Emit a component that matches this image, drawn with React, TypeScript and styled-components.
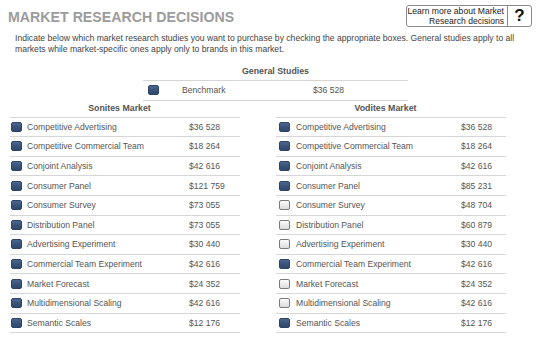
import React from 'react';
import styled, { createGlobalStyle } from 'styled-components';

const GlobalStyle = createGlobalStyle`
  body {
    margin: 0;
    background: #ffffff;
    font-family: "Liberation Sans", Arial, sans-serif;
  }
`;

const Page = styled.div`
  width: 536px;
  height: 341px;
  overflow: hidden;
  color: #555555;
`;

const Header = styled.div`
  display: flex;
  justify-content: space-between;
  align-items: flex-start;
  padding: 5px 4px 0 8px;
`;

const Title = styled.h1`
  margin: 4px 0 0;
  font-size: 14.2px;
  line-height: 16px;
  font-weight: 700;
  color: #9c9c9c;
`;

const HelpButton = styled.button`
  display: flex;
  align-items: stretch;
  width: 126px;
  height: 22px;
  padding: 0;
  border: 1px solid #8a8a8a;
  border-radius: 3px;
  background: #ffffff;
  font-family: inherit;
  cursor: pointer;
`;

const HelpText = styled.span`
  flex: 1;
  padding: 1px 3px 0 0;
  text-align: right;
  font-size: 8.6px;
  line-height: 9.6px;
  color: #222222;
`;

const HelpMark = styled.span`
  display: flex;
  align-items: center;
  justify-content: center;
  width: 23px;
  border-left: 1px solid #8a8a8a;
  font-size: 17px;
  font-weight: 700;
  color: #111111;
`;

const Intro = styled.p`
  width: 510px;
  margin: 5.5px 0 0 15px;
  font-size: 8.6px;
  line-height: 11px;
  color: #444444;
`;

const GeneralSection = styled.section`
  width: 265px;
  margin: 10.5px 0 0 143px;
`;

const SectionTitle = styled.h2<{ $shift?: number }>`
  margin: 0;
  padding: 0 ${(p) => p.$shift ?? 0}px 3px 0;
  font-size: 8.8px;
  line-height: 12px;
  font-weight: 700;
  text-align: center;
  color: #555555;
`;

const Table = styled.div`
  border-top: 1px solid #d6d6d6;
`;

const Row = styled.div<{ $indent: number; $gap: number; $label: number }>`
  display: grid;
  grid-template-columns: 11px ${(p) => p.$label}px auto;
  column-gap: ${(p) => p.$gap}px;
  align-items: center;
  height: 18.6px;
  padding-left: ${(p) => p.$indent}px;
  border-bottom: 1px solid #d6d6d6;
  font-size: 8.6px;
  color: #555555;
`;

const Label = styled.span`
  white-space: nowrap;
`;

const Price = styled.span`
  white-space: nowrap;
`;

const Box = styled.span<{ $checked: boolean }>`
  box-sizing: border-box;
  width: 11px;
  height: 10px;
  border-radius: 2px;
  border: 1px solid ${(p) => (p.$checked ? '#2d4466' : '#7a7a7a')};
  background: ${(p) =>
    p.$checked
      ? 'linear-gradient(#4b6790, #3a5479 50%, #2f486c)'
      : 'linear-gradient(#fbfbfb, #dcdcdc)'};
`;

const Markets = styled.div`
  display: flex;
  gap: 36px;
  padding-left: 10px;
  margin-top: 1px;
`;

const Market = styled.section`
  width: 230px;
`;

type Study = { name: string; price: string; checked: boolean };

const sonites: Study[] = [
  { name: 'Competitive Advertising', price: '$36 528', checked: true },
  { name: 'Competitive Commercial Team', price: '$18 264', checked: true },
  { name: 'Conjoint Analysis', price: '$42 616', checked: true },
  { name: 'Consumer Panel', price: '$121 759', checked: true },
  { name: 'Consumer Survey', price: '$73 055', checked: true },
  { name: 'Distribution Panel', price: '$73 055', checked: true },
  { name: 'Advertising Experiment', price: '$30 440', checked: true },
  { name: 'Commercial Team Experiment', price: '$42 616', checked: true },
  { name: 'Market Forecast', price: '$24 352', checked: true },
  { name: 'Multidimensional Scaling', price: '$42 616', checked: true },
  { name: 'Semantic Scales', price: '$12 176', checked: true },
];

const vodites: Study[] = [
  { name: 'Competitive Advertising', price: '$36 528', checked: true },
  { name: 'Competitive Commercial Team', price: '$18 264', checked: true },
  { name: 'Conjoint Analysis', price: '$42 616', checked: true },
  { name: 'Consumer Panel', price: '$85 231', checked: true },
  { name: 'Consumer Survey', price: '$48 704', checked: false },
  { name: 'Distribution Panel', price: '$60 879', checked: false },
  { name: 'Advertising Experiment', price: '$30 440', checked: false },
  { name: 'Commercial Team Experiment', price: '$42 616', checked: true },
  { name: 'Market Forecast', price: '$24 352', checked: false },
  { name: 'Multidimensional Scaling', price: '$42 616', checked: false },
  { name: 'Semantic Scales', price: '$12 176', checked: true },
];

function MarketTable({
  title,
  studies,
  indent,
  gap,
  label,
}: {
  title: string;
  studies: Study[];
  indent: number;
  gap: number;
  label: number;
}) {
  return (
    <Market>
      <SectionTitle $shift={11}>{title}</SectionTitle>
      <Table>
        {studies.map((s) => (
          <Row key={s.name} $indent={indent} $gap={gap} $label={label}>
            <Box $checked={s.checked} />
            <Label>{s.name}</Label>
            <Price>{s.price}</Price>
          </Row>
        ))}
      </Table>
    </Market>
  );
}

function App() {
  return (
    <Page>
      <GlobalStyle />
      <Header>
        <Title>MARKET RESEARCH DECISIONS</Title>
        <HelpButton>
          <HelpText>
            Learn more about Market
            <br />
            Research decisions
          </HelpText>
          <HelpMark>?</HelpMark>
        </HelpButton>
      </Header>
      <Intro>
        Indicate below which market research studies you want to purchase by checking the
        appropriate boxes. General studies apply to all markets while market-specific ones apply
        only to brands in this market.
      </Intro>
      <GeneralSection>
        <SectionTitle>General Studies</SectionTitle>
        <Table>
          <Row $indent={5} $gap={23} $label={108}>
            <Box $checked />
            <Label>Benchmark</Label>
            <Price>$36 528</Price>
          </Row>
        </Table>
      </GeneralSection>
      <Markets>
        <MarketTable title="Sonites Market" studies={sonites} indent={1} gap={5} label={157} />
        <MarketTable title="Vodites Market" studies={vodites} indent={3} gap={6} label={159} />
      </Markets>
    </Page>
  );
}

export default App;
